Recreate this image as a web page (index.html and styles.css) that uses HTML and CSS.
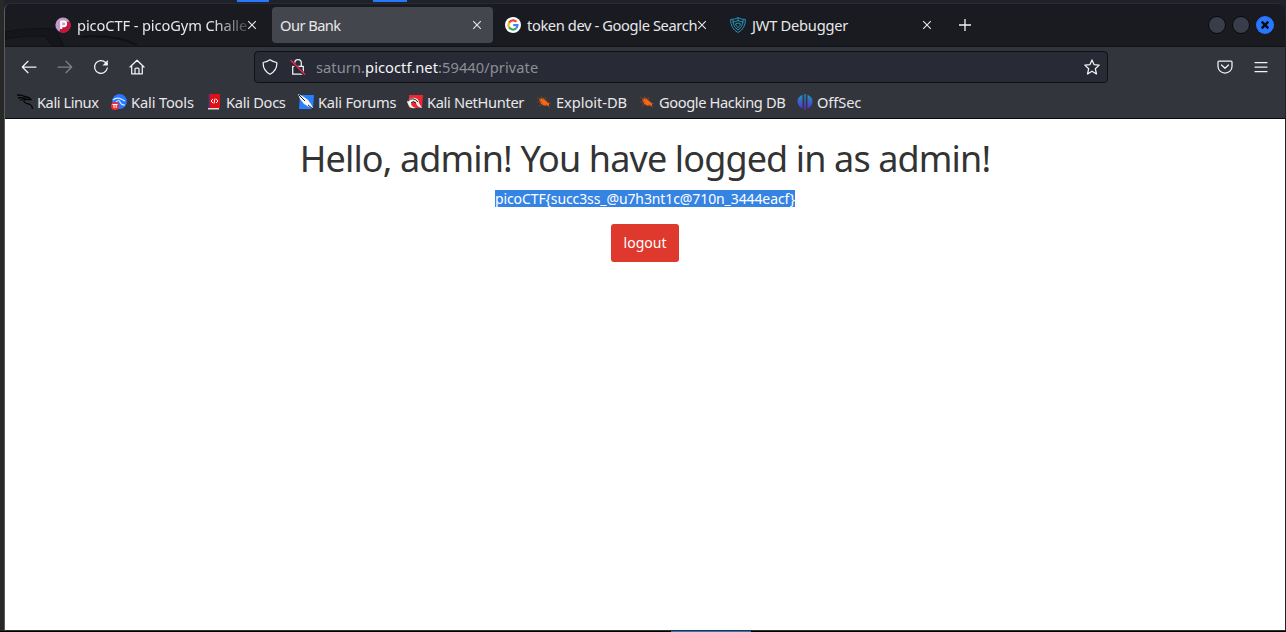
FILE: index.html
```html
<!DOCTYPE html>
<html lang="en">
<head>
<meta charset="utf-8">
<title>Our Bank</title>
<link rel="stylesheet" href="styles.css">
</head>
<body>
<div class="desktop">
  <div class="panel-mark first"></div>
  <div class="panel-mark second"></div>
  <div class="window">
    <header class="tabbar">
      <svg class="theme-art" width="150" height="20" viewBox="0 0 150 20"><path d="M0 6Q28 1 50 3L59 20H47L40 10Q20 9 0 13Z" fill="#15161a" stroke="#101115"/><path d="M76 11Q110 8 132 19" fill="none" stroke="#101115" stroke-width="2"/></svg>
      <div class="tab">
        <svg class="tab-icon" viewBox="0 0 16 16"><circle cx="8" cy="8" r="7.6" fill="#c39bc9"/><path d="M14.8 4.5A7.6 7.6 0 0 1 4.5 14.8L5 12 9 9 11 5Z" fill="#c3163a"/><path d="M6.200 12V4.500h2.600a2.300 2.300 0 0 1 0 4.700H6.400" fill="none" stroke="#fff" stroke-width="2"/></svg>
        <span class="tab-title t1 faded">picoCTF - picoGym Challe</span>
        <svg class="close" viewBox="0 0 10 10"><path d="M1.200 1.200l7.600 7.600M8.800 1.200L1.200 8.800"/></svg>
      </div>
      <div class="tab active">
        <span class="tab-title t2">Our Bank</span>
        <svg class="close" viewBox="0 0 10 10"><path d="M1.200 1.200l7.600 7.600M8.800 1.200L1.200 8.800"/></svg>
      </div>
      <div class="tab">
        <svg class="tab-icon" viewBox="0 0 16 16"><circle cx="8" cy="8" r="8" fill="#fff"/><g fill="none" stroke-width="2.200"><path d="M4.100 5.700A4.600 4.600 0 0 1 11.400 4.800" stroke="#ea4335"/><path d="M4.100 5.700A4.700 4.700 0 0 0 4.100 10.300" stroke="#fbbc05"/><path d="M4.100 10.300A4.600 4.600 0 0 0 11 11.500" stroke="#34a853"/><path d="M11 11.500A4.700 4.700 0 0 0 12.500 8.100H8.200" stroke="#4285f4"/></g></svg>
        <span class="tab-title t3">token dev - Google Search</span>
        <svg class="close" viewBox="0 0 10 10"><path d="M1.200 1.200l7.600 7.600M8.800 1.200L1.200 8.800"/></svg>
      </div>
      <div class="tab">
        <svg class="tab-icon" viewBox="0 0 16 16" fill="none" stroke="#2793b8"><path d="M.6 2.500Q5 2.500 8 .6Q11 2.500 15.400 2.500Q15.500 11.500 8 15.500Q.5 11.500.6 2.500Z"/><path d="M3 5Q6 4.800 8 3.500Q10 4.800 13 5Q12.500 10.500 8 13Q3.500 10.500 3 5Z"/><path d="M5.500 6.800L8 6l2.500.8Q10 9.500 8 10.600Q6 9.500 5.500 6.800ZM8 1v3M3 2.500v3M13 2.500v3"/></svg>
        <span class="tab-title t4">JWT Debugger</span>
        <svg class="close" viewBox="0 0 10 10"><path d="M1.200 1.200l7.600 7.600M8.800 1.200L1.200 8.800"/></svg>
      </div>
      <svg class="new-tab" viewBox="0 0 14 14"><path d="M7 1v12M1 7h12"/></svg>
      <div class="controls">
        <span class="control"></span><span class="control"></span>
        <svg class="control-close" viewBox="0 0 18 18"><circle cx="9" cy="9" r="9" fill="#2777ff"/><path d="M5.700 5.700l6.600 6.600M12.300 5.700l-6.600 6.600" stroke="#080b12" stroke-width="2.400"/></svg>
      </div>
    </header>
    <nav class="toolbar">
      <div class="nav-buttons">
        <svg class="ico" viewBox="0 0 16 16"><path d="M15 8H1.500M7 2.300L1.300 8 7 13.700"/></svg>
        <svg class="ico dim" viewBox="0 0 16 16"><path d="M1 8h13.500M9 2.300L14.700 8 9 13.700"/></svg>
        <svg class="ico" viewBox="0 0 16 16"><path d="M14.300 9A6.400 6.400 0 1 1 12.600 3.500L14 5"/><path d="M14.800 1v5.400H9.500Z" class="solid"/></svg>
        <svg class="ico" viewBox="0 0 16 16"><path d="M1 8L8 1.200 15 8M2.700 7v7.800h10.600V7M6 14.500V10q0-1 1-1h2q1 0 1 1v4.500"/></svg>
      </div>
      <div class="address">
        <svg class="ico" viewBox="0 0 16 16"><path d="M8 .8Q10.500 2.800 14.800 3.500Q15.300 11.500 8 15.200Q.7 11.500 1.200 3.500Q5.500 2.800 8 .8Z"/></svg>
        <svg class="ico lock" viewBox="0 0 16 16"><path d="M2.700 7.300h10.600v7.900H2.700ZM4.700 7V4a3.300 3.300 0 0 1 6.600 0v3"/><path d="M1.200 2.300L14 15.100" stroke="#282a35" stroke-width="3"/><path d="M1 1.500L14.700 15.200" stroke="#e22850" stroke-width="1.500"/></svg>
        <span class="url">saturn.<b>picoctf.net</b>:59440/private</span>
        <svg class="ico star" viewBox="0 0 16 16"><path d="M8 .9l2 4.700 5.200.5-3.900 3.600 1.200 5.300L8 12.200 3.500 15l1.200-5.300L.8 6.100 6 5.600Z"/></svg>
      </div>
      <div class="actions">
        <svg class="ico" viewBox="0 0 16 16"><path d="M2 2h12q1 0 1 1v4.500a7 6.600 0 0 1-14 0V3q0-1 1-1ZM4.500 6L8 9.300 11.500 6"/></svg>
        <svg class="ico" viewBox="0 0 16 16"><path d="M2 3.500h12M2 8h12M2 12.500h12"/></svg>
      </div>
    </nav>
    <nav class="bookmarks">
      <a class="bookmark linux"><svg viewBox="0 0 16 16"><g fill="none" stroke="#050607" stroke-width="1.300"><path d="M0 1Q5 .8 8 2.500Q12 3 14 5.500L10.500 5.500Q6.500 5 7 7.500Q8 9.500 12 10Q15 11 15.500 15"/><path d="M1 4Q5 3 9 4.500M3 6.500Q6 4.500 9 5"/></g></svg><span>Kali Linux</span></a>
      <a class="bookmark tools"><svg viewBox="0 0 16 16"><circle cx="8.500" cy="7.500" r="7.400" fill="#2777ff"/><path d="M2 6Q6 2.500 11 5.500L14 7M5 8Q8 5 9 8T14 11" fill="none" stroke="#d9e9ff" stroke-width="1.200"/><circle cx="4" cy="12" r="4" fill="#ef2d32"/><path d="M1.500 10.500h5M3 10.500V14M5.200 10.500V14" stroke="#fff" fill="none"/></svg><span>Kali Tools</span></a>
      <a class="bookmark docs"><svg viewBox="0 0 16 16"><path d="M2 0h12v14H2Z" fill="#df1117"/><path d="M2 0h1.500v14H2Z" fill="#263b79"/><path d="M2 14h11v1.500H2Z" fill="#ddd"/><path d="M7 5L5 7l2 2M10 5l2 2-2 2M9 4.500L8 9.500" fill="none" stroke="#fff"/></svg><span>Kali Docs</span></a>
      <a class="bookmark forums"><svg viewBox="0 0 16 16"><path d="M2 1h14l-1 14H1Z" fill="#2680ff"/><path d="M0 0l6 3 4 3 3 4 2 4-4-1-5-3-4-5Z" fill="#f6f6f6"/><path d="M1 1l6 6M10 11l5 4" fill="none" stroke="#171b24"/></svg><span>Kali Forums</span></a>
      <a class="bookmark nethunter"><svg viewBox="0 0 16 16"><path d="M2 1h14l-1 13H2Z" fill="#ee2833"/><path d="M0 8Q3 3 8 4Q12 5 12 9L15 14Q10 13 9 9Q6 6 4 10Q5 13 9 14Q2 15 1 10Z" fill="#f3f3f3"/><path d="M1 7q5-5 10 1M4 9q2-3 5 0" stroke="#1c1c1f" fill="none"/></svg><span>Kali NetHunter</span></a>
      <a class="bookmark exploit"><svg viewBox="0 0 16 16"><path d="M3 5l4-1 3 3 3 2v3h-4l-4-2Z" fill="#f46816"/><path d="M1 3l4 3M5 2l2 4M9 3l1 4M1 8l5 0M3 12l4-2M7 12l4-1M11 8l4 2M10 11l4 2" stroke="#8d431f" stroke-width=".8"/></svg><span>Exploit-DB</span></a>
      <a class="bookmark hacking"><svg viewBox="0 0 16 16"><path d="M3 5l4-1 3 3 3 2v3h-4l-4-2Z" fill="#f46816"/><path d="M1 3l4 3M5 2l2 4M9 3l1 4M1 8l5 0M3 12l4-2M7 12l4-1M11 8l4 2M10 11l4 2" stroke="#8d431f" stroke-width=".8"/></svg><span>Google Hacking DB</span></a>
      <a class="bookmark offsec"><svg viewBox="0 0 16 16"><defs><linearGradient id="violet" x2="0" y2="1"><stop stop-color="#159eba"/><stop offset="1" stop-color="#6424d6"/></linearGradient></defs><path d="M5.500 .8V14.500Q.5 12 .5 7.500T5.500 .8ZM10.500 .8v13.700q5-2.500 5-7T10.500 .8ZM7.300 0h1.400v16H7.300Z" fill="url(#violet)"/></svg><span>OffSec</span></a>
    </nav>
    <main class="page">
      <h1>Hello, admin! You have logged in as admin!</h1>
      <p><span class="flag">picoCTF{succ3ss_@u7h3nt1c@710n_3444eacf}</span></p>
      <button class="logout">logout</button>
    </main>
  </div>
  <div class="bottom-mark"></div>
</div>
</body>
</html>
```
FILE: styles.css
```css
* { box-sizing: border-box; }
body { margin: 0; overflow: hidden; font-family: "Noto Sans", sans-serif; }
svg { display: block; flex: none; }
.desktop { position: relative; width: 1286px; height: 632px; padding: 3px 1px 1px 4px; background: linear-gradient(#000, #000) 0 631px / 100% 1px no-repeat, linear-gradient(90deg, #282828 0 4px, #20222a 4px); }
.panel-mark { position: absolute; top: 0; height: 2px; background: #2777ff; }
.first { left: 237px; width: 32px; }
.second { left: 373px; width: 34px; }
.bottom-mark { position: absolute; left: 671px; top: 631px; width: 80px; height: 1px; background: #2777cf; }
.window { height: 628px; border-left: 1px solid #5b5b5b; border-bottom: 1px solid #303138; border-radius: 7px 7px 0 0; overflow: hidden; display: flex; flex-direction: column; background: #33353d; }
.tabbar { position: relative; height: 44px; padding: 4px 11px 4px 42px; display: flex; align-items: center; background: #1a1b20; border-top: 1px solid #2a2b30; border-bottom: 1px solid #111216; }
.theme-art { position: absolute; left: 0; bottom: 0; }
.tab { position: relative; width: 221px; height: 36px; margin-right: 4px; padding: 0 11px 0 8px; border-radius: 4px; display: flex; align-items: center; color: #e8e8ea; font-size: 14.67px; white-space: nowrap; }
.active { background: #44464e; }
.tab-icon { width: 16px; height: 16px; margin-right: 6px; }
.tab .tab-title { flex: 0 1 auto; min-width: 0; line-height: 22px; }
.t1 { letter-spacing: -.11px; }
.t2 { letter-spacing: -.55px; }
.t3 { letter-spacing: -.38px; }
.t4 { letter-spacing: -.25px; }
.faded { -webkit-mask-image: linear-gradient(90deg, #000 80%, rgba(0,0,0,.2) 100%); mask-image: linear-gradient(90deg, #000 80%, rgba(0,0,0,.2) 100%); }
.close { width: 10px; height: 10px; margin-left: auto; fill: none; stroke: #e8e8ea; stroke-width: 1.1; }
.new-tab { width: 14px; height: 14px; margin-left: 11px; stroke: #f2f2f3; stroke-width: 1.3; }
.controls { margin-left: auto; display: flex; align-items: center; gap: 6px; }
.control { width: 18px; height: 18px; border: 1px solid #08090c; border-radius: 50%; background: #383d49; }
.control-close { width: 18px; height: 18px; }
.toolbar { height: 40px; padding: 4px 16px; display: flex; align-items: center; background: #33353d; }
.ico { width: 16px; height: 16px; fill: none; stroke: #f2f2f3; stroke-width: 1.25; stroke-linejoin: round; stroke-linecap: round; }
.solid { fill: #f2f2f3; stroke: none; }
.dim { opacity: .4; }
.nav-buttons { width: 233px; display: flex; gap: 20px; }
.address { width: 854px; height: 32px; padding: 0 7px; display: flex; align-items: center; border: 1px solid #101116; border-radius: 4px; background: #282a35; }
.lock { margin-left: 12px; }
.url { margin-left: 10px; color: #8d8e96; font-size: 14.67px; line-height: 22px; letter-spacing: .06px; white-space: nowrap; }
.url b { color: #f6f6f8; font-weight: 400; }
.star { margin-left: auto; }
.actions { margin-left: auto; display: flex; gap: 20px; }
.bookmarks { height: 32px; padding: 0 0 1px 12px; display: grid; grid-template-columns: 94px 95px 92px 109px 129px 103px 158px 80px; align-items: center; border-bottom: 1px solid #090a0d; background: #33353d; }
.bookmark { display: flex; align-items: center; gap: 4px; color: #e8e8ea; font-size: 14.67px; line-height: 22px; white-space: nowrap; }
.bookmark svg { width: 16px; height: 16px; }
.linux { letter-spacing: -.45px; }
.tools { letter-spacing: -.15px; }
.docs { letter-spacing: -.3px; }
.forums { letter-spacing: -.25px; }
.nethunter { letter-spacing: -.35px; }
.exploit { letter-spacing: -.05px; }
.hacking { letter-spacing: -.4px; }
.offsec { letter-spacing: -.1px; }
.page { flex: 1; background: #fff; display: flex; flex-direction: column; align-items: center; color: #333; }
.page h1 { margin: 19px 0 0; height: 44px; font-size: 36px; font-weight: 400; line-height: 42px; letter-spacing: -.88px; white-space: nowrap; }
.page p { margin: 8px 0 0; height: 17px; line-height: 17px; font-size: 14px; }
.flag { display: block; height: 17px; background: #3584e4; color: #fff; letter-spacing: -.1px; white-space: nowrap; }
.logout { width: 68px; height: 38px; margin-top: 17px; padding: 0; border: 0; border-radius: 3px; background: #df382c; color: #fff; font: 14px/20px "Noto Sans", sans-serif; }
```
